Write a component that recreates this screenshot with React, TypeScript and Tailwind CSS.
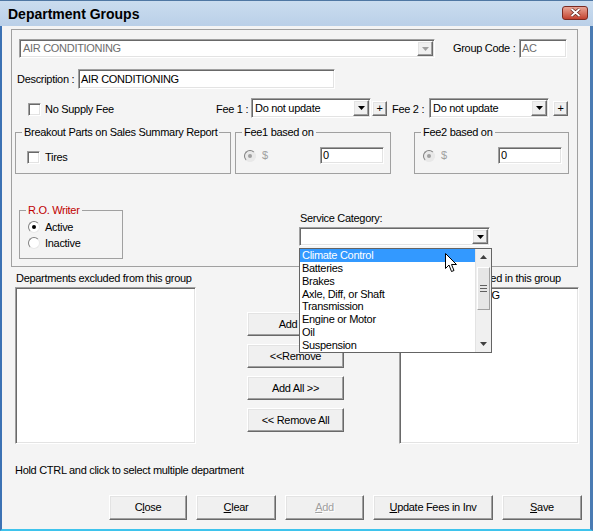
import React from "react";

const sunken =
  "bg-white border border-t-[#a0a0a0] border-l-[#a0a0a0] border-b-white border-r-white shadow-[inset_1px_1px_0_#696969,inset_-1px_-1px_0_#e3e3e3]";
const raised =
  "bg-[#f0f0f0] border border-t-white border-l-white border-b-[#696969] border-r-[#696969] shadow-[inset_-1px_-1px_0_#a0a0a0,inset_1px_1px_0_#e3e3e3]";

function Arrow({ disabled = false }: { disabled?: boolean }) {
  return (
    <div className={"w-[16px] h-full flex items-center justify-center " + raised}>
      <svg width="7" height="4" viewBox="0 0 7 4">
        <polygon points="0,0 7,0 3.5,4" fill={disabled ? "#a0a0a0" : "#000"} />
      </svg>
    </div>
  );
}

function Combo({ text, w, h = "h-[20px]", disabled = false }: { text: string; w: string; h?: string; disabled?: boolean }) {
  return (
    <div className={`${w} ${h} flex items-stretch p-[1px] ${sunken}`}>
      <div className={"flex-1 flex items-center pl-[2px] " + (disabled ? "text-[#6d6d6d]" : "text-black")}>{text}</div>
      <Arrow disabled={disabled} />
    </div>
  );
}

function Box({ className = "", children }: { className?: string; children?: React.ReactNode }) {
  return <div className={`${sunken} ${className}`}>{children}</div>;
}

function Check() {
  return <div className={"w-[13px] h-[13px] shrink-0 " + sunken} />;
}

function Radio({ on = false, disabled = false }: { on?: boolean; disabled?: boolean }) {
  return (
    <div
      className={
        "w-[12px] h-[12px] shrink-0 rounded-full border border-t-[#808080] border-l-[#808080] border-b-[#e8e8e8] border-r-[#e8e8e8] flex items-center justify-center " +
        (disabled ? "bg-[#e9e9e9]" : "bg-white")
      }
    >
      {on && <div className={"w-[4px] h-[4px] rounded-full " + (disabled ? "bg-[#a0a0a0]" : "bg-black")} />}
    </div>
  );
}

function Btn({ children, className = "" }: { children: React.ReactNode; className?: string }) {
  return <div className={`flex items-center justify-center ${raised} ${className}`}>{children}</div>;
}

const items = [
  "Climate Control",
  "Batteries",
  "Brakes",
  "Axle, Diff, or Shaft",
  "Transmission",
  "Engine or Motor",
  "Oil",
  "Suspension",
];

export default function App() {
  return (
    <div className="w-[593px] h-[531px] flex flex-col overflow-hidden whitespace-nowrap bg-[#3b6fb0] font-['Liberation_Sans',Arial,sans-serif] text-[11px] leading-[13px] tracking-[-0.3px] text-black select-none">
      {/* title bar */}
      <div className="h-[26px] shrink-0 flex items-center pl-[8px] pr-[5px] border-t border-[#4f77a3] bg-gradient-to-b from-[#cadcef] to-[#bad0e8]">
        <span className="text-[14px] leading-[16px] font-bold tracking-normal">Department Groups</span>
        <div className="ml-auto mb-[2px] w-[26px] h-[14px] rounded-[3px] border border-[#7a2b22] bg-gradient-to-b from-[#e8a596] to-[#c2412f] flex items-center justify-center">
          <svg width="11" height="9" viewBox="0 0 11 9">
            <path d="M1.5 1 L9.5 8 M9.5 1 L1.5 8" stroke="#5a1f18" strokeWidth="3.2" />
            <path d="M1.5 1 L9.5 8 M9.5 1 L1.5 8" stroke="#fff" strokeWidth="1.8" />
          </svg>
        </div>
      </div>

      {/* body */}
      <div className="flex-1 flex flex-col pl-[9px] bg-[#f4f4f4] border-l-2 border-l-[#3c72b4] border-r-[3px] border-r-[#4a7bb3] border-b-2 border-b-[#3ec3ec]">
        {/* top frame */}
        <div className="mt-[3px] w-[567px] h-[238px] shrink-0 border border-[#a0a0a0] flex flex-col">
          <div className="mt-[9px] ml-[7px] h-[19px] flex items-center">
            <Combo text="AIR CONDITIONING" w="w-[416px]" h="h-[19px]" disabled />
            <span className="ml-[18px] w-[66px]">Group Code :</span>
            <Box className="w-[48px] h-[19px] flex items-center pl-[2px] text-[#6d6d6d]">AC</Box>
          </div>

          <div className="mt-[11px] ml-[5px] h-[20px] flex items-center">
            <span className="w-[61px]">Description :</span>
            <Box className="w-[257px] h-[20px] flex items-center pl-[2px]">AIR CONDITIONING</Box>
          </div>

          <div className="mt-[9px] ml-[16px] h-[20px] flex items-center">
            <div className="w-[188px] flex items-center mt-[2px]">
              <Check />
              <span className="ml-[4px]">No Supply Fee</span>
            </div>
            <span className="w-[35px] mt-[2px]">Fee 1 :</span>
            <Combo text="Do not update" w="w-[120px]" />
            <Btn className="ml-[1px] w-[15px] h-[15px] mt-[1px]">+</Btn>
            <span className="ml-[5px] w-[37px] mt-[2px]">Fee 2 :</span>
            <Combo text="Do not update" w="w-[120px]" />
            <Btn className="ml-[4px] w-[15px] h-[15px] mt-[1px]">+</Btn>
          </div>

          <div className="mt-[8px] flex items-start">
            <fieldset className="ml-[3px] w-[216px] h-[48px] px-[6px] border border-[#a0a0a0]">
              <legend className="px-[2px]">Breakout Parts on Sales Summary Report</legend>
              <div className="mt-[12px] ml-[5px] flex items-center">
                <Check />
                <span className="ml-[5px]">Tires</span>
              </div>
            </fieldset>
            <fieldset className="ml-[4px] w-[156px] h-[48px] px-[6px] border border-[#a0a0a0]">
              <legend className="px-[2px]">Fee1 based on</legend>
              <div className="mt-[8px] ml-[2px] flex items-center">
                <Radio on disabled />
                <span className="ml-[6px] text-[#a0a0a0]">$</span>
                <Box className="ml-auto w-[64px] h-[17px] flex items-center pl-[2px]">0</Box>
              </div>
            </fieldset>
            <fieldset className="ml-[23px] w-[155px] h-[48px] px-[6px] border border-[#a0a0a0]">
              <legend className="px-[2px]">Fee2 based on</legend>
              <div className="mt-[8px] ml-[2px] flex items-center">
                <Radio on disabled />
                <span className="ml-[6px] text-[#a0a0a0]">$</span>
                <Box className="ml-auto w-[64px] h-[17px] flex items-center pl-[2px]">0</Box>
              </div>
            </fieldset>
          </div>

          <div className="mt-[30px] flex items-start">
            <fieldset className="ml-[7px] w-[104px] h-[55px] px-[6px] border border-[#a0a0a0]">
              <legend className="px-[2px] text-[#c00000]">R.O. Writer</legend>
              <div className="mt-[2px] ml-[2px] h-[16px] flex items-center">
                <Radio on />
                <span className="ml-[5px]">Active</span>
              </div>
              <div className="ml-[2px] h-[16px] flex items-center">
                <Radio />
                <span className="ml-[5px]">Inactive</span>
              </div>
            </fieldset>
            <div className="ml-[176px] mt-[8px] flex flex-col">
              <span className="ml-[1px]">Service Category:</span>
              <div className="relative mt-[2px]">
                <Combo text="" w="w-[191px]" h="h-[19px]" />
                {/* open dropdown list */}
                <div className="absolute z-10 left-0 top-[21px] w-[193px] h-[105px] bg-white border border-[#646464] flex">
                  <div className="flex-1 flex flex-col">
                    {items.map((it, i) => (
                      <div
                        key={it}
                        className={
                          "h-[13px] pl-[2px] flex items-center overflow-hidden " +
                          (i === 0 ? "bg-[#3399ff] text-white" : "")
                        }
                      >
                        {it}
                      </div>
                    ))}
                  </div>
                  <div className="w-[16px] flex flex-col bg-[#f0f0f0] border-l border-[#e3e3e3]">
                    <div className="h-[16px] flex items-center justify-center">
                      <svg width="7" height="4" viewBox="0 0 7 4">
                        <polygon points="0,4 7,4 3.5,0" fill="#404040" />
                      </svg>
                    </div>
                    <div className="mt-[2px] h-[43px] mx-[1px] flex items-center justify-center bg-[#e6e6e6] border border-t-white border-l-white border-b-[#a0a0a0] border-r-[#a0a0a0]">
                      <div className="w-[7px] flex flex-col gap-[2px]">
                        <div className="h-[1px] bg-[#606060]" />
                        <div className="h-[1px] bg-[#606060]" />
                        <div className="h-[1px] bg-[#606060]" />
                      </div>
                    </div>
                    <div className="mt-auto h-[16px] flex items-center justify-center">
                      <svg width="7" height="4" viewBox="0 0 7 4">
                        <polygon points="0,0 7,0 3.5,4" fill="#404040" />
                      </svg>
                    </div>
                  </div>
                  {/* mouse pointer */}
                  <svg className="absolute left-[145px] top-[4px]" width="13" height="20" viewBox="0 0 13 20">
                    <path d="M0.5 0.5 L0.5 15.5 L4 12 L6.5 18.5 L9 17.5 L6.5 11.5 L11.5 11.5 Z" fill="#fff" stroke="#000" strokeWidth="1" />
                  </svg>
                </div>
              </div>
            </div>
          </div>
        </div>

        {/* lists */}
        <div className="mt-[5px] flex items-start">
          <div className="ml-[4px] w-[181px] flex flex-col">
            <span className="ml-[1px]">Departments excluded from this group</span>
            <Box className="mt-[2px] h-[157px]" />
          </div>
          <div className="ml-[51px] w-[97px] pt-[40px] flex flex-col gap-[8px]">
            <Btn className="h-[24px]">Add &gt;&gt;</Btn>
            <Btn className="h-[24px]">&lt;&lt;Remove</Btn>
            <Btn className="h-[24px]">Add All &gt;&gt;</Btn>
            <Btn className="h-[24px]">&lt;&lt; Remove All</Btn>
          </div>
          <div className="ml-[55px] w-[180px] flex flex-col">
            <span className="ml-[2px]">Departments included in this group</span>
            <Box className="mt-[2px] h-[157px] pl-[2px] pt-[1px]">AIR CONDITIONING</Box>
          </div>
        </div>

        <div className="mt-[20px] ml-[4px]">Hold CTRL and click to select multiple department</div>

        <div className="mt-[18px] ml-[98px] flex gap-[9px]">
          <Btn className="w-[78px] h-[25px]">
            C<u>l</u>ose
          </Btn>
          <Btn className="w-[80px] h-[25px]">
            <u>C</u>lear
          </Btn>
          <Btn className="w-[79px] h-[25px]">
            <span className="text-[#a0a0a0] [text-shadow:1px_1px_0_#fff]">
              <u>A</u>dd
            </span>
          </Btn>
          <Btn className="w-[120px] h-[25px]">
            <u>U</u>pdate Fees in Inv
          </Btn>
          <Btn className="w-[80px] h-[25px]">
            <u>S</u>ave
          </Btn>
        </div>
      </div>
    </div>
  );
}
